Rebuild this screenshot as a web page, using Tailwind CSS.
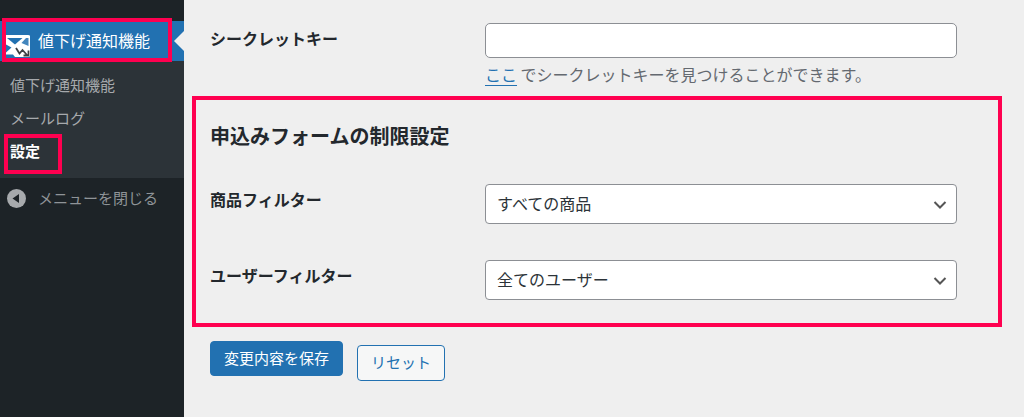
<!DOCTYPE html>
<html lang="ja">
<head>
  <meta charset="UTF-8" />
  <meta name="viewport" content="width=device-width, initial-scale=1.0"/>
  <title>設定 | 値下げ通知機能</title>
  <script src="https://cdn.jsdelivr.net/npm/@tailwindcss/browser@4"></script>
</head>
<body class="flex min-h-screen bg-[#efefef] font-['Noto_Sans_CJK_JP',sans-serif] text-base leading-6 text-[#23282d]">

  <!-- Sidebar -->
  <aside class="w-46 shrink-0 bg-[#1d2327] pt-[21px] text-[15px] text-[#a7aaad]">
    <nav>
      <a href="#" class="relative flex h-10 items-start bg-[#2271b1] pt-[7px] pl-[6px] text-base text-white">
        <svg class="mt-[7px] h-6 w-6 shrink-0" viewBox="0 0 24 24">
          <path d="M0 0h22q2.500 0 2.500 2.500v17q0 2.500-2.500 2.500H9l-2-2.500H0z" fill="#fff"/>
          <path d="M1 3h15.500L9 9.500z" fill="#2271b1"/>
          <path d="M20 3h2.500v8l-7-3z" fill="#4386bd"/>
          <path d="M0 9.500l5.500 3L0 17.500z" fill="#2271b1"/>
          <path d="M10 13l3.500 5.500 3-3.500 4.500 5M22.500 15.500v5h-5" fill="none" stroke="#3c3f42" stroke-width="1.800"/>
        </svg>
        <span class="ml-2">値下げ通知機能</span>
        <span class="absolute top-[10px] right-0 border-y-10 border-r-10 border-y-transparent border-r-[#efefef]"></span>
        <span class="absolute -top-[3px] left-[2px] h-11 w-[170px] border-4 border-[#ff0050]"></span>
      </a>
      <ul class="bg-[#2c3338] pt-[7px] pb-[11px]">
        <li><a href="#" class="block px-[10px] py-[5px] leading-[23px]">値下げ通知機能</a></li>
        <li><a href="#" class="block px-[10px] py-[5px] leading-[23px]">メールログ</a></li>
        <li class="relative">
          <a href="#" class="block px-[10px] py-[5px] leading-[23px] font-bold text-white">設定</a>
          <span class="absolute top-0 left-1 h-10 w-[58px] border-4 border-[#ff0050]"></span>
        </li>
      </ul>
    </nav>
    <button type="button" class="flex h-10 w-full items-center pl-[7px] text-[#8f9498]">
      <svg class="h-[19px] w-[19px]" viewBox="0 0 19 19">
        <circle cx="9.500" cy="9.500" r="9.500" fill="#a7aaad"/>
        <path d="M12 5v9L5.500 9.500z" fill="#1d2327"/>
      </svg>
      <span class="ml-3">メニューを閉じる</span>
    </button>
  </aside>

  <!-- Settings form -->
  <main class="min-w-0 flex-1">
    <form class="pt-[23px]">
      <div class="flex pr-[67px] pl-[26px]">
        <label for="secretKey" class="w-[275px] shrink-0 pt-[3px] font-bold">シークレットキー</label>
        <div class="min-w-0 flex-1">
          <input type="text" id="secretKey" class="block h-[35px] w-full rounded-[5px] border border-[#8c8f94] bg-white px-3" />
          <p class="mt-1 text-[#646970]">
            <a href="#" class="text-[#2271b1] underline underline-offset-4">ここ</a> でシークレットキーを見つけることができます。
          </p>
        </div>
      </div>

      <section class="mt-[10px] mr-[22px] ml-2 border-4 border-[#ff0050] pt-6 pr-[41px] pb-[23px] pl-[14px]">
        <h2 class="text-xl leading-6 font-bold">申込みフォームの制限設定</h2>

        <div class="mt-9 flex">
          <label for="productFilter" class="w-[275px] shrink-0 pt-[3px] font-bold">商品フィルター</label>
          <div class="relative min-w-0 flex-1">
            <select id="productFilter" class="block h-10 w-full appearance-none rounded-[4px] border border-[#8c8f94] bg-white pr-10 pb-[2px] pl-[11px] text-[#2c3338]">
              <option>すべての商品</option>
            </select>
            <svg class="pointer-events-none absolute top-4 right-[10px] h-[10px] w-[14px]" viewBox="0 0 14 10">
              <path d="M1.500 2L7 7.500 12.500 2" fill="none" stroke="#555" stroke-width="2"/>
            </svg>
          </div>
        </div>

        <div class="mt-9 flex">
          <label for="userFilter" class="w-[275px] shrink-0 pt-[3px] font-bold">ユーザーフィルター</label>
          <div class="relative min-w-0 flex-1">
            <select id="userFilter" class="block h-10 w-full appearance-none rounded-[4px] border border-[#8c8f94] bg-white pr-10 pb-[2px] pl-[11px] text-[#2c3338]">
              <option>全てのユーザー</option>
            </select>
            <svg class="pointer-events-none absolute top-4 right-[10px] h-[10px] w-[14px]" viewBox="0 0 14 10">
              <path d="M1.500 2L7 7.500 12.500 2" fill="none" stroke="#555" stroke-width="2"/>
            </svg>
          </div>
        </div>
      </section>

      <div class="mt-[14px] flex items-start gap-[14px] pl-[26px] text-[15px]">
        <button type="submit" class="h-[35px] rounded-[4px] border border-[#2271b1] bg-[#2271b1] px-[13px] pb-[2px] text-white">変更内容を保存</button>
        <button type="reset" class="mt-1 h-9 rounded-[4px] border border-[#2271b1] bg-[#f6f7f7] px-[13px] pb-[2px] text-[#2271b1]">リセット</button>
      </div>
    </form>
  </main>
</body>
</html>
